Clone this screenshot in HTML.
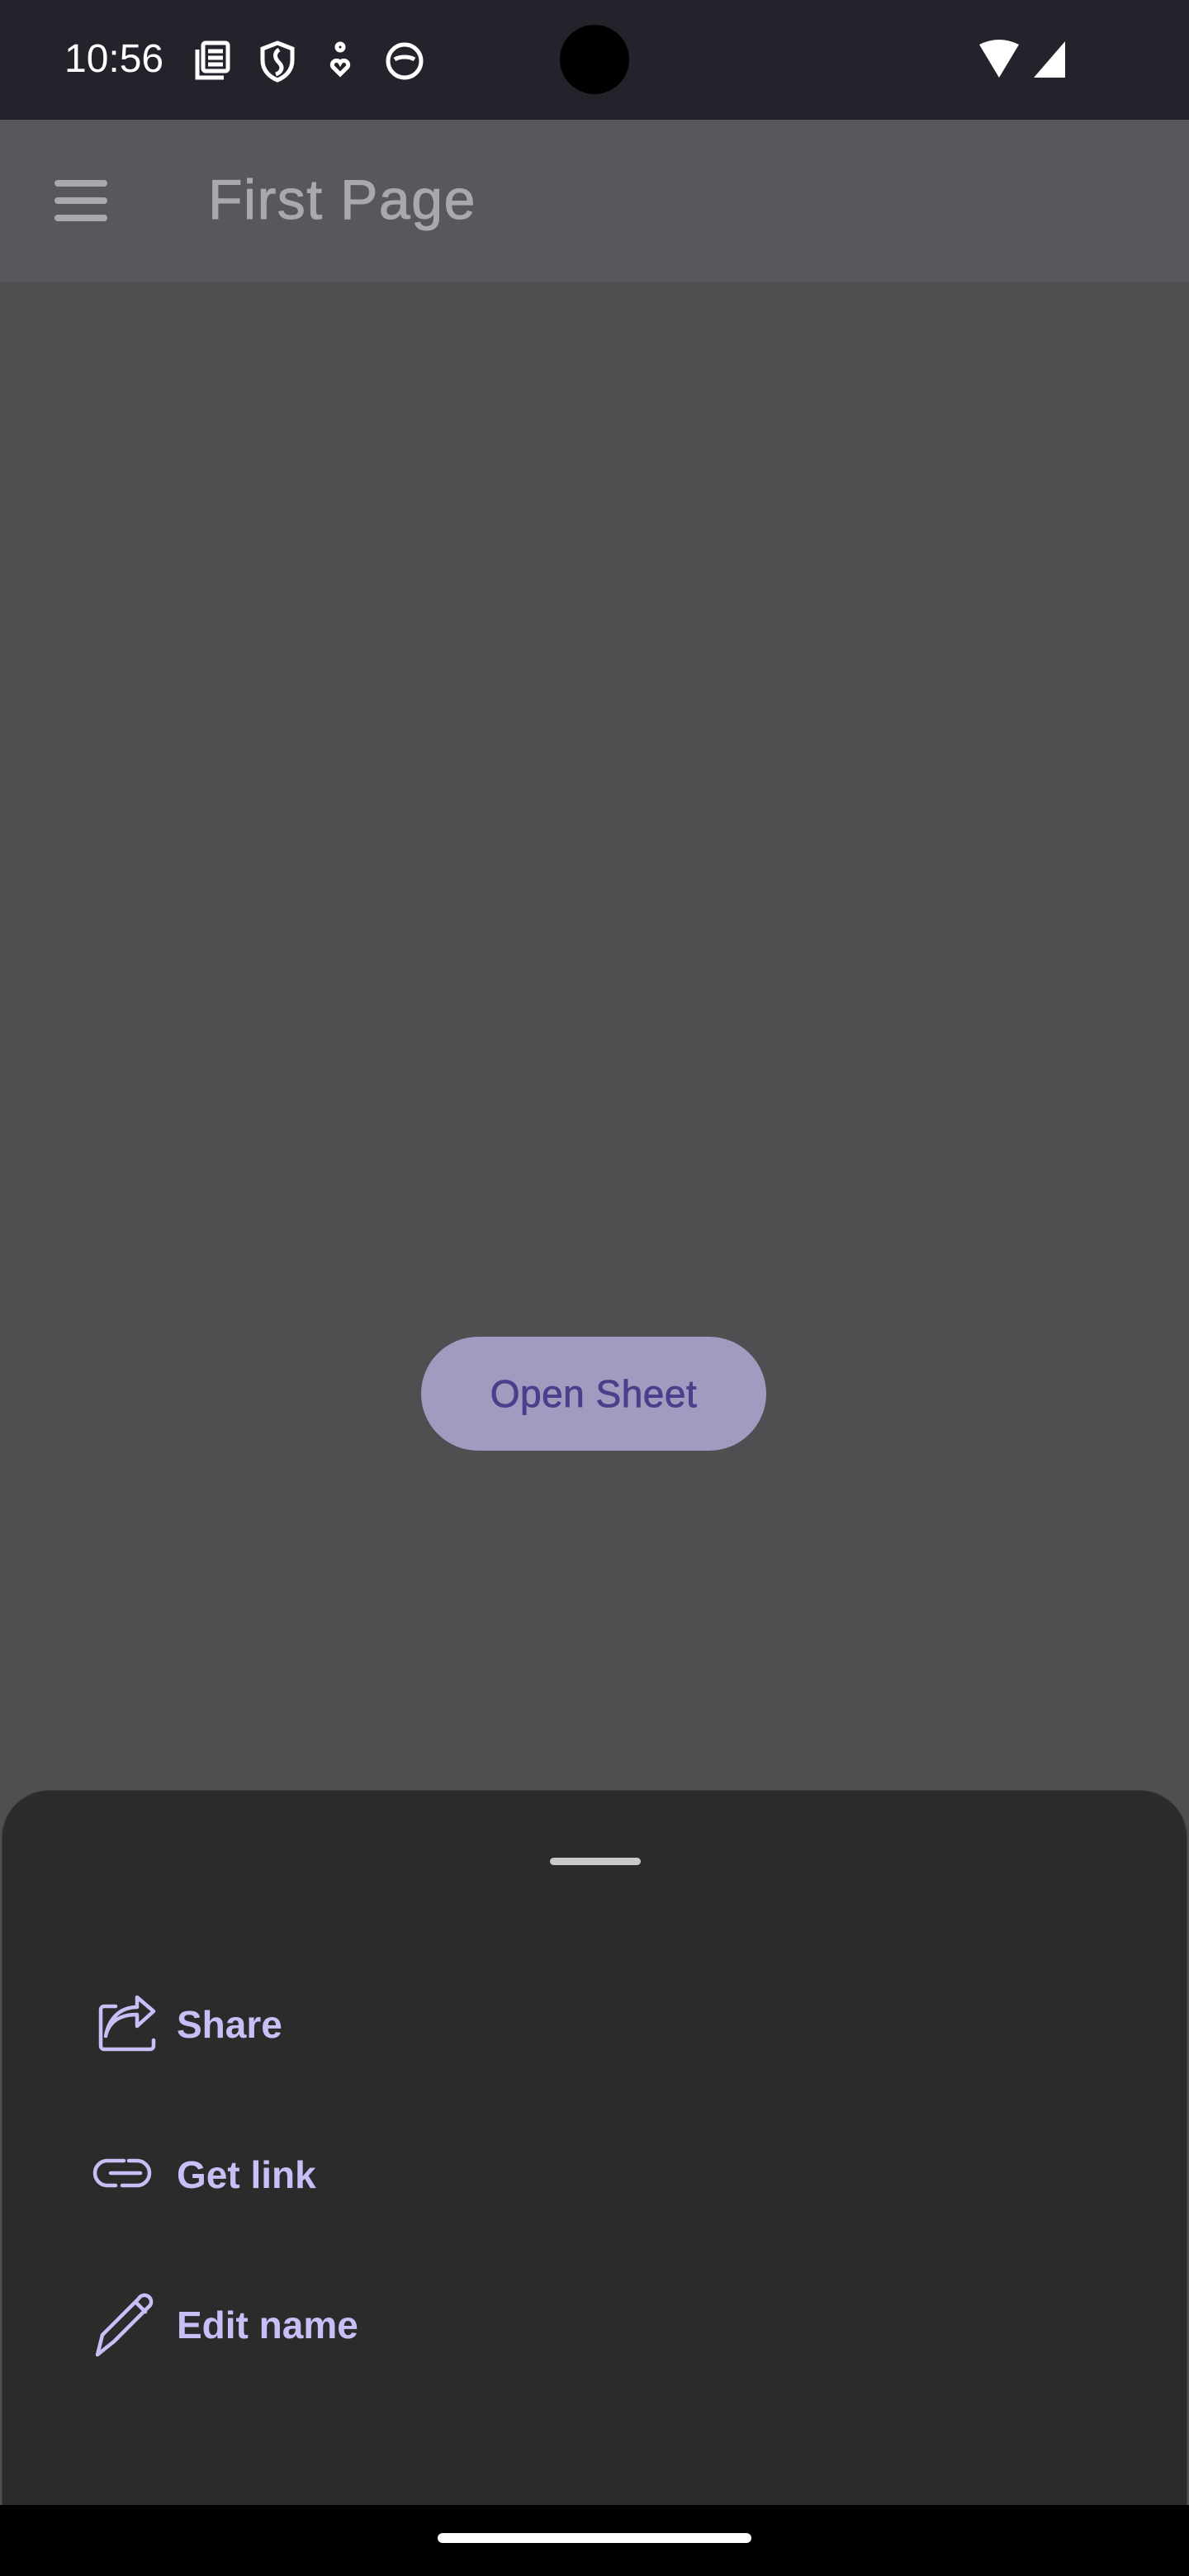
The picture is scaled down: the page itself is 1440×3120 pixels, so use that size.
<!DOCTYPE html>
<html><head><meta charset="utf-8"><style>
*{margin:0;padding:0;box-sizing:border-box}
body{width:1440px;height:3120px;background:#4f4f51;position:relative;overflow:hidden;font-family:"Liberation Sans",sans-serif}
.abs{position:absolute}
</style></head><body>
<div class="abs" style="left:0;top:0;width:1440px;height:145px;background:#22232b"></div>
<div class="abs" style="left:78px;top:44px;color:#fff;font-size:48px;letter-spacing:0">10:56</div>
<svg class="abs" style="left:234px;top:48px" width="290" height="52" viewBox="0 0 290 52" fill="none" stroke="#fff" stroke-width="5">
<rect x="12" y="4" width="30" height="34" rx="3"/><path d="M5 12v34h32"/><path d="M18 14h18M18 22h18M18 30h18"/>
<path d="M102 4l18 7v14c0 12-8 20-18 24-10-4-18-12-18-24V11z"/><path d="M104 12c-6 4-6 10 0 16s2 12-4 14"/>
<circle cx="178" cy="9" r="4"/><path d="M178 42l-9-9a5 5 0 0 1 9-5 5 5 0 0 1 9 5z"/>
<circle cx="256" cy="26" r="20"/><path d="M244 24c6-4 18-4 24 0" />
</svg>
<div class="abs" style="left:678px;top:30px;width:84px;height:84px;border-radius:50%;background:#000"></div>
<svg class="abs" style="left:1184px;top:48px" width="112" height="48" viewBox="0 0 112 48"><path d="M2 6q24-12 48 0L26 46z" fill="#fff"/><path d="M106 2v44H68z" fill="#fff"/></svg>
<div class="abs" style="left:0;top:145px;width:1440px;height:196px;background:#58575c"></div>
<div class="abs" style="left:66px;top:218px;width:64px;height:8px;background:#a9a8ad;border-radius:4px"></div>
<div class="abs" style="left:66px;top:239px;width:64px;height:8px;background:#a9a8ad;border-radius:4px"></div>
<div class="abs" style="left:66px;top:260px;width:64px;height:8px;background:#a9a8ad;border-radius:4px"></div>
<div class="abs" style="left:252px;top:204px;color:#a9a8ad;font-size:68px;line-height:76px;letter-spacing:1.5px;-webkit-text-stroke:1px #a9a8ad">First Page</div>
<div class="abs" style="left:510px;top:1619px;width:418px;height:138px;border-radius:69px;background:#a09bbf;color:#4b3f8c;font-size:46px;line-height:138px;text-align:center;letter-spacing:0.5px;-webkit-text-stroke:0.8px #4b3f8c">Open Sheet</div>
<div class="abs" style="left:2px;top:2168px;width:1436px;height:866px;background:#2b2b2c;border-radius:58px 58px 0 0;border:1px solid #3a3a3b;border-bottom:none"></div>
<div class="abs" style="left:666px;top:2250px;width:110px;height:9px;border-radius:5px;background:#cacaca"></div>
<svg class="abs" style="left:110px;top:2416px" width="80" height="450" viewBox="0 0 80 450" fill="none" stroke="#c9bff6" stroke-width="4.5" stroke-linecap="round" stroke-linejoin="round">
<path d="M30 14H16a4 4 0 0 0-4 4v44a4 4 0 0 0 4 4h56a4 4 0 0 0 4-4V55"/>
<path d="M18 50c4-18 18-26 38-26V38L76 20 56 3v12C36 15 22 28 18 50z"/>
<path d="M30 231h-10a15 15 0 0 1 0-30h20M46 201h10a15 15 0 0 1 0 30H38M24 216h36"/>
<path d="M8 436l6-24 44-44a7 7 0 0 1 14 8l-44 44z M54 372l12 12"/>
</svg>
<div class="abs" style="left:214px;top:2424px;color:#c9bff6;font-size:46px;font-weight:bold;line-height:56px">Share</div>
<div class="abs" style="left:214px;top:2606px;color:#c9bff6;font-size:46px;font-weight:bold;line-height:56px">Get link</div>
<div class="abs" style="left:214px;top:2788px;color:#c9bff6;font-size:46px;font-weight:bold;line-height:56px">Edit name</div>
<div class="abs" style="left:0;top:3034px;width:1440px;height:86px;background:#000"></div>
<div class="abs" style="left:530px;top:3068px;width:380px;height:12px;border-radius:6px;background:#fff"></div>
</body></html>
